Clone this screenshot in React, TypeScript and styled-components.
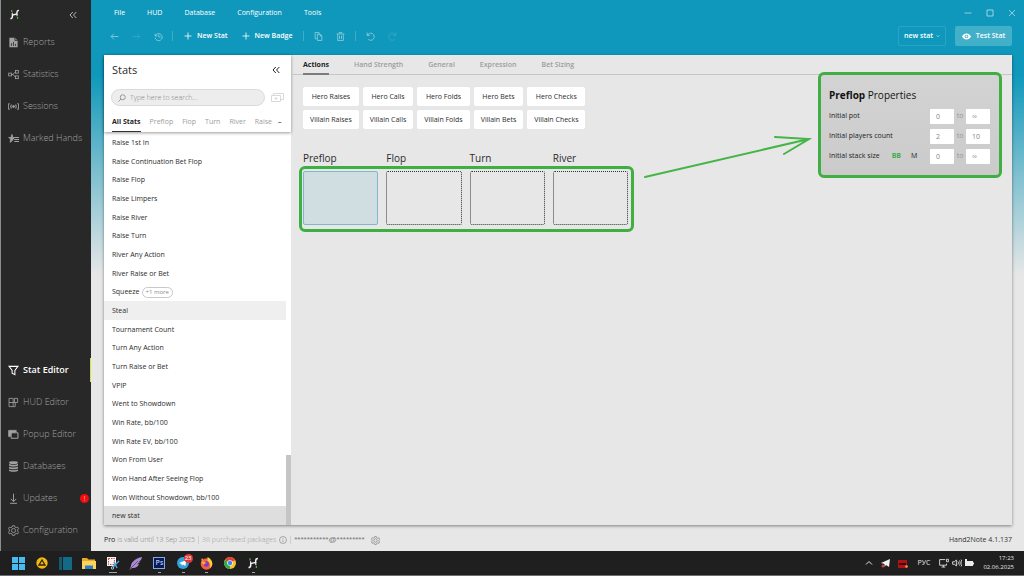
import React from "react";
import styled, { createGlobalStyle, css } from "styled-components";

const GlobalStyle = createGlobalStyle`
  *, *::before, *::after { box-sizing: border-box; }
  html, body { margin: 0; padding: 0; background: #e7e7e7; }
  body, button, input, select {
    font-family: "Open Sans", "Noto Sans", sans-serif;
    font-size: 7px;
    line-height: 10px;
    color: #2b2b2b;
  }
  button, input, select { border: 0; margin: 0; padding: 0; background: none; border-radius: 0; outline: none; }
  button { cursor: pointer; white-space: nowrap; }
  ul { list-style: none; margin: 0; padding: 0; }
  h1, h2, h3 { margin: 0; font-weight: 400; }
  a { color: inherit; text-decoration: none; }
  svg { display: block; flex: none; }
`;

/* ---------- Shell ---------- */

const Desktop = styled.div`
  min-height: 100vh;
  display: flex;
  flex-direction: column;
`;

const AppWindow = styled.div`
  flex: 1;
  display: flex;
  border-left: 1px solid #8d8d8d;
`;

const Sidebar = styled.nav`
  width: 90px;
  flex: none;
  display: flex;
  flex-direction: column;
  justify-content: space-between;
  background: #282828;
  padding-bottom: 5px;
`;

const SidebarHeader = styled.div`
  height: 26px;
  display: flex;
  align-items: center;
  justify-content: space-between;
  padding: 3px 14px 0 8px;
`;

const NavItem = styled.a<{ $active?: boolean }>`
  position: relative;
  height: 32px;
  display: flex;
  align-items: center;
  gap: 4px;
  padding-left: 7px;
  font-size: 9px;
  line-height: 12px;
  white-space: nowrap;
  color: ${(p) => (p.$active ? "#ffffff" : "#a2a2a2")};
  font-weight: ${(p) => (p.$active ? 600 : 300)};
  ${(p) =>
    p.$active &&
    css`
      &::after {
        content: "";
        position: absolute;
        right: 0;
        top: 4px;
        bottom: 4px;
        width: 1px;
        background: #d6e04a;
      }
    `}
`;

const AlertDot = styled.span`
  width: 9px;
  height: 9px;
  margin: 0 2px 0 auto;
  border-radius: 50%;
  background: #f30d0d;
  color: #fff;
  font-size: 7px;
  line-height: 9px;
  text-align: center;
`;

const Main = styled.main`
  flex: 1;
  min-width: 0;
  display: flex;
  flex-direction: column;
  padding: 0 12px 0 13px;
  background: linear-gradient(#0f98bb 0, #0f98bb 75px, #7fc0d0 175px, #e7e7e7 275px);
`;

/* ---------- Title bar and toolbar ---------- */

const TitleBar = styled.header`
  height: 26px;
  display: flex;
  align-items: center;
  justify-content: space-between;
  padding-left: 10px;
`;

const MenuBar = styled.div`
  display: flex;
  gap: 22px;
`;

const MenuButton = styled.button`
  color: #fff;
  font-weight: 500;
`;

const WindowControls = styled.div`
  display: flex;
  gap: 14px;
  margin-right: -4px;
`;

const IconButton = styled.button<{ $faint?: boolean }>`
  min-width: 8px;
  display: flex;
  align-items: center;
  justify-content: center;
  color: #fff;
  opacity: ${(p) => (p.$faint ? 0.2 : 0.65)};
`;

const Toolbar = styled.div`
  height: 20px;
  margin: 0 0 9px -1px;
  display: flex;
  align-items: center;
`;

const ToolButton = styled(IconButton)`
  width: 22px;
  height: 20px;
`;

const ToolDivider = styled.span`
  width: 1px;
  height: 10px;
  margin: 0 4px 0 3px;
  background: #3fadc8;
`;

const AddButton = styled.button`
  display: flex;
  align-items: center;
  gap: 5px;
  padding: 0 7px;
  color: #fff;
  font-weight: 600;
`;

const ToolbarRight = styled.div`
  margin-left: auto;
  display: flex;
  gap: 9px;
`;

const StatPicker = styled.label`
  width: 48px;
  height: 20px;
  display: flex;
  align-items: center;
  padding: 0 5px;
  border: 1px solid #2ba3c2;
  border-radius: 2px;
  color: #fff;
`;

const StatSelect = styled.select`
  appearance: none;
  flex: 1;
  min-width: 0;
  color: #fff;
  font-weight: 600;
`;

const TestButton = styled.button`
  width: 57px;
  height: 20px;
  display: flex;
  align-items: center;
  justify-content: center;
  gap: 5px;
  border-radius: 2px;
  background: #43b0ca;
  color: #fff;
  font-weight: 600;
`;

/* ---------- Workspace ---------- */

const Workspace = styled.div`
  flex: 1;
  display: flex;
  background: #e7e7e7;
  box-shadow: 0 1px 3px rgba(0, 0, 0, 0.45);
`;

const StatsPanel = styled.section`
  width: 187px;
  flex: none;
  display: flex;
  flex-direction: column;
  background: #fff;
`;

const StatsHead = styled.div`
  position: relative;
  height: 77px;
  margin-bottom: 1px;
  display: flex;
  flex-direction: column;
  gap: 10px;
  padding: 6px 7px 0 8px;
  box-shadow: 0 1px 3px rgba(0, 0, 0, 0.4);
`;

const PanelTitleRow = styled.div`
  display: flex;
  justify-content: space-between;
  align-items: center;
  height: 18px;
  padding-right: 4px;
`;

const PanelTitle = styled.h2`
  font-size: 11px;
  line-height: 16px;
`;

const SearchRow = styled.div`
  display: flex;
  align-items: center;
  justify-content: space-between;
`;

const SearchBox = styled.label`
  width: 154px;
  height: 17px;
  margin-left: -1px;
  display: flex;
  align-items: center;
  gap: 4px;
  padding-left: 6px;
  border: 1px solid #dadada;
  border-radius: 9px;
  background: #ededed;
  color: #858585;
`;

const SearchInput = styled.input`
  flex: 1;
  min-width: 0;
  font-weight: 300;
  &::placeholder { color: #858585; opacity: 1; }
`;

const StatTabs = styled.div`
  display: flex;
  gap: 9px;
`;

const Tab = styled.button<{ $active?: boolean }>`
  height: 16px;
  padding-bottom: 3px;
  border-bottom: 1px solid ${(p) => (p.$active ? "#333" : "transparent")};
  color: ${(p) => (p.$active ? "#1f1f1f" : "#9c9c9c")};
  font-weight: ${(p) => (p.$active ? 700 : 400)};
`;

const OverflowTab = styled(Tab)`
  color: #444;
  font-weight: 600;
  margin-left: -3px;
`;

const ListArea = styled.div`
  flex: 1;
  display: flex;
`;

const StatList = styled.ul`
  flex: 1;
  display: flex;
  flex-direction: column;
`;

const StatRow = styled.li<{ $tone?: "hover" | "selected" }>`
  flex: 1;
  min-height: 18px;
  display: flex;
  align-items: center;
  gap: 2px;
  padding: 1px 0 0 8px;
  background: ${(p) =>
    p.$tone === "hover" ? "#efefef" : p.$tone === "selected" ? "#dedede" : "transparent"};
`;

const MoreBadge = styled.span`
  padding: 0 3px;
  border: 1px solid #c8c8c8;
  border-radius: 6px;
  font-size: 6px;
  line-height: 9px;
  color: #8d8d8d;
`;

const ScrollTrack = styled.div`
  width: 5px;
  display: flex;
  align-items: flex-end;
`;

const ScrollThumb = styled.div`
  width: 100%;
  height: 70px;
  background: #c5c5c5;
`;

/* ---------- Editor ---------- */

const Editor = styled.section`
  position: relative;
  flex: 1;
  min-width: 0;
`;

const EditorTabs = styled.div`
  display: flex;
  gap: 25px;
  height: 20px;
  padding: 0 12px;
  border-bottom: 1px solid #c6c6c6;
`;

const EditorTab = styled(Tab)`
  height: 20px;
  padding: 2px 0 0;
  border-bottom: 2px solid ${(p) => (p.$active ? "#7c7c7c" : "transparent")};
  font-weight: ${(p) => (p.$active ? 700 : 600)};
`;

const ActionGrid = styled.div`
  display: grid;
  grid-template-columns: repeat(5, max-content);
  gap: 4px;
  padding: 12px;
`;

const ActionButton = styled.button`
  height: 19px;
  padding: 0 7px;
  border-radius: 2px;
  background: #fff;
`;

const Streets = styled.div`
  width: 335px;
  margin: 9px 0 0 8px;
`;

const StreetRow = styled.div`
  display: grid;
  grid-template-columns: repeat(4, 1fr);
  gap: 8px;
`;

const StreetNames = styled(StreetRow)`
  padding: 0 6px 0 4px;
`;

const StreetName = styled.h3`
  font-size: 10px;
  line-height: 16px;
`;

const SlotFrame = styled(StreetRow)`
  padding: 2px 3px 4px 1px;
  border: 3px solid #3fae43;
  border-radius: 6px;
`;

const Slot = styled.button<{ $active?: boolean }>`
  height: 54px;
  border-radius: 2px;
  border: 1px ${(p) => (p.$active ? "solid #7db9cb" : "dotted #333")};
  background: ${(p) => (p.$active ? "#d0dde1" : "transparent")};
`;

const ArrowLine = styled.svg`
  position: absolute;
  left: 352px;
  top: 78px;
`;

const PropertiesCard = styled.form`
  position: absolute;
  top: 17px;
  right: 10px;
  width: 184px;
  height: 106px;
  padding: 12px 9px 0 8px;
  border: 3px solid #3fae43;
  border-radius: 6px;
  background: linear-gradient(#d3d3d3, #cbcbcb);
`;

const CardTitle = styled.h2`
  margin-bottom: 3px;
  font-size: 10px;
  line-height: 16px;
  color: #111;
`;

const PropRow = styled.div`
  height: 20px;
  display: flex;
  align-items: center;
  color: #222;
`;

const RangeGroup = styled.div`
  margin-left: auto;
  display: grid;
  grid-template-columns: 24px 12px 24px;
  align-items: center;
  text-align: center;
  color: #969696;
`;

const RangeInput = styled.input`
  width: 24px;
  height: 15px;
  padding-left: 6px;
  border-radius: 1px;
  background: #fff;
  color: #858585;
`;

const UnitOption = styled.label<{ $on?: boolean }>`
  margin-left: ${(p) => (p.$on ? "12px" : "10px")};
  color: ${(p) => (p.$on ? "#3cae50" : "#222")};
  font-weight: ${(p) => (p.$on ? 700 : 400)};
`;

const HiddenRadio = styled.input`
  position: absolute;
  opacity: 0;
  width: 1px;
  height: 1px;
`;

/* ---------- Status bar ---------- */

const StatusBar = styled.footer`
  height: 26px;
  display: flex;
  align-items: center;
  padding-top: 4px;
  color: #7c7c7c;
  font-weight: 300;
  white-space: nowrap;
`;

const Strong = styled.strong`
  margin-right: 2px;
  color: #222;
`;

const Pale = styled.span`
  margin-right: 3px;
  color: #9e9e9e;
`;

const StatusDivider = styled.span`
  width: 1px;
  height: 8px;
  margin: 0 3px;
  background: #cecece;
`;

const Account = styled.span`
  margin-right: 6px;
  font-family: "Liberation Sans", sans-serif;
  font-size: 8px;
  color: #777;
`;

const Version = styled.span`
  margin-left: auto;
  color: #333;
  font-weight: 400;
`;

/* ---------- Taskbar ---------- */

const Taskbar = styled.footer`
  height: 25px;
  flex: none;
  display: flex;
  align-items: center;
  justify-content: space-between;
  padding: 0 10px 0 7px;
  background: #1f1f1f;
  border-bottom: 1px solid #6e6e6e;
`;

const TaskIcons = styled.div`
  width: 258px;
  display: grid;
  grid-template-columns: repeat(11, 1fr);
`;

const TaskButton = styled.button<{ $mark?: "dot" | "bar" }>`
  position: relative;
  height: 24px;
  display: flex;
  align-items: center;
  justify-content: center;
  ${(p) =>
    p.$mark &&
    css`
      &::after {
        content: "";
        position: absolute;
        bottom: 2px;
        left: 50%;
        width: ${p.$mark === "bar" ? 8 : 3}px;
        margin-left: ${p.$mark === "bar" ? -4 : -1}px;
        height: 1px;
        background: #a5a5a5;
      }
    `}
`;

const CountBadge = styled.span`
  position: absolute;
  top: 3px;
  right: 2px;
  width: 9px;
  height: 9px;
  border-radius: 50%;
  background: #e2383c;
  color: #fff;
  font-size: 6px;
  line-height: 9px;
  text-align: center;
`;

const PsTile = styled.span`
  width: 12px;
  height: 12px;
  border: 1px solid #86a8e8;
  background: #0a1a52;
  color: #a9c8ff;
  font-weight: 600;
  line-height: 10px;
`;

const Tray = styled.div`
  display: flex;
  align-items: center;
  gap: 9px;
  color: #e6e6e6;
`;

const TrayGroup = styled.div<{ $gap: number }>`
  display: flex;
  align-items: center;
  gap: ${(p) => p.$gap}px;
`;

const Clock = styled.time`
  text-align: right;
  font-size: 6px;
  line-height: 9px;
`;

/* ---------- Icons ---------- */

type IconProps = { size?: number; children: React.ReactNode; w?: number };

const Glyph = ({ size = 10, w = 1.2, children }: IconProps) => (
  <svg
    width={size}
    height={size}
    viewBox="0 0 16 16"
    fill="none"
    stroke="currentColor"
    strokeWidth={w}
    aria-hidden="true"
  >
    {children}
  </svg>
);

const HandLogo = ({ size = 11 }: { size?: number }) => (
  <svg width={size} height={size} viewBox="0 0 16 16" fill="none" aria-hidden="true">
    <path d="M4 1.500v3M12.500 11.500v3" stroke="#4caf3a" strokeWidth="1.800" />
    <path d="M2 14c2.500 0 3-1.500 3-3.500V8.800l6.500-1.600V5.500c0-2 .5-3.500 3-3.500" stroke="#f2f2f2" strokeWidth="2" />
    <path d="M4.800 9V5.500M11.700 7v3.500" stroke="#f2f2f2" strokeWidth="1.500" />
  </svg>
);

const DoubleChevron = ({ color }: { color: string }) => (
  <svg width="8" height="8" viewBox="0 0 8 8" fill="none" stroke={color} aria-hidden="true">
    <path d="M3.800 1 1 4l2.800 3M7.300 1 4.500 4l2.800 3" />
  </svg>
);

const navIcons: Record<string, React.ReactNode> = {
  Reports: (
    <>
      <path d="M2 1h8l4 4v10H2z" fill="currentColor" stroke="none" />
      <path d="M10 1v4h4M5 13V9M8 13V7M11 13v-3" stroke="#282828" />
    </>
  ),
  Statistics: (
    <>
      <rect x="1" y="6" width="4" height="4" />
      <rect x="11" y="2" width="4" height="4" />
      <rect x="11" y="10" width="4" height="4" />
      <path d="M5 8h3M11 4 7 8l4 4" />
    </>
  ),
  Sessions: (
    <>
      <circle cx="8" cy="8" r="1.500" fill="currentColor" />
      <path d="M5 5c-1.200 2-1.200 4 0 6M11 5c1.200 2 1.200 4 0 6M2 3C0 6 0 10 2 13M14 3c2 3 2 7 0 10" strokeWidth="1.500" />
    </>
  ),
  "Marked Hands": (
    <>
      <path d="M10 6.500H7L5.700 2 4.500 6.500H1l3 2.500-1 4.500L6.500 11" fill="currentColor" />
      <path d="M9 6.500h7M9 9.500h7M9 12.500h7" strokeWidth="1.500" />
    </>
  ),
  "Stat Editor": <path d="M1.500 2h13L10 8v6l-4-2V8z" strokeWidth="1.500" />,
  "HUD Editor": <path d="M1.500 2h6v12h-6zM1.500 8h12.500V2H9.500v6M7.500 14h3V8" />,
  "Popup Editor": (
    <>
      <path d="M3 11H1V2h11v2" fill="currentColor" />
      <rect x="4.500" y="5.500" width="10" height="8" rx="1" fill="#282828" strokeWidth="1.600" />
    </>
  ),
  Databases: (
    <g fill="currentColor" stroke="none">
      <ellipse cx="8" cy="2.500" rx="6.500" ry="2" />
      <path d="M1.500 4c2 2 11 2 13 0v2.500c-2 2-11 2-13 0zM1.500 8c2 2 11 2 13 0v2.500c-2 2-11 2-13 0zM1.500 12c2 2 11 2 13 0v2c-2 2-11 2-13 0z" />
    </g>
  ),
  Updates: <path d="M8 1v11M4 8.500 8 12.500l4-4M3 15h10" strokeWidth="1.400" />,
  Configuration: (
    <>
      <path d="M6.500 1h3l.6 2 1.900.8 2-.8 1.300 2.500L14 7v2l1.300 1.500L14 13l-2-.8-1.900.8-.6 2h-3l-.6-2-1.900-.8-2 .8L.7 10.500 2 9V7L.7 5.500 2 3l2 .8L5.900 3z" />
      <circle cx="8" cy="8" r="3" />
    </>
  ),
};

const Gear = () => <Glyph size={9}>{navIcons.Configuration}</Glyph>;

/* ---------- Data ---------- */

const topNav = ["Reports", "Statistics", "Sessions", "Marked Hands"];
const bottomNav = ["Stat Editor", "HUD Editor", "Popup Editor", "Databases", "Updates", "Configuration"];
const menus = ["File", "HUD", "Database", "Configuration", "Tools"];
const statTabs = ["All Stats", "Preflop", "Flop", "Turn", "River", "Raise"];
const editorTabs = ["Actions", "Hand Strength", "General", "Expression", "Bet Sizing"];
const actions = ["Raises", "Calls", "Folds", "Bets", "Checks"];
const streets = ["Preflop", "Flop", "Turn", "River"];
const stats = [
  "Raise 1st In",
  "Raise Continuation Bet Flop",
  "Raise Flop",
  "Raise Limpers",
  "Raise River",
  "Raise Turn",
  "River Any Action",
  "River Raise or Bet",
  "Squeeze",
  "Steal",
  "Tournament Count",
  "Turn Any Action",
  "Turn Raise or Bet",
  "VPIP",
  "Went to Showdown",
  "Win Rate, bb/100",
  "Win Rate EV, bb/100",
  "Won From User",
  "Won Hand After Seeing Flop",
  "Won Without Showdown, bb/100",
  "new stat",
];

/* ---------- Composite parts ---------- */

const NavGroup = ({ items }: { items: string[] }) => (
  <div>
    {items.map((name) => (
      <NavItem key={name} href="#" $active={name === "Stat Editor"}>
        <Glyph size={11}>{navIcons[name]}</Glyph>
        {name}
        {name === "Updates" && <AlertDot>!</AlertDot>}
      </NavItem>
    ))}
  </div>
);

const Plus = () => (
  <Glyph size={8} w={1.6}>
    <path d="M8 1v14M1 8h14" />
  </Glyph>
);

const Range = ({ label, from, to }: { label: string; from: string; to: string }) => (
  <RangeGroup>
    <RangeInput aria-label={`${label} from`} defaultValue={from} />
    <span>to</span>
    <RangeInput aria-label={`${label} to`} defaultValue={to} />
  </RangeGroup>
);

const TaskbarIcons = () => (
  <TaskIcons>
    <TaskButton aria-label="Start">
      <svg width="13" height="13" viewBox="0 0 13 13" fill="#45bdf0">
        <path d="M0 0h6v6H0zM7 0h6v6H7zM0 7h6v6H0zM7 7h6v6H7z" />
      </svg>
    </TaskButton>
    <TaskButton aria-label="Player">
      <svg width="12" height="12" viewBox="0 0 12 12">
        <circle cx="6" cy="6" r="5.700" fill="#f2b619" />
        <path d="M6 3 9 8H3z" fill="#f2b619" stroke="#2a2410" strokeWidth="1.300" />
      </svg>
    </TaskButton>
    <TaskButton aria-label="Library">
      <svg width="13" height="13" viewBox="0 0 13 13">
        <path d="M0 0h3v13H0z" fill="#125a70" />
        <path d="M4 0h9v13H4z" fill="#136a84" />
      </svg>
    </TaskButton>
    <TaskButton aria-label="Files">
      <svg width="14" height="13" viewBox="0 0 14 13">
        <path d="M0 1h5l1.500 1.500H13V12H0z" fill="#e9a92c" />
        <path d="M0 4h14v8H0z" fill="#fbd45c" />
        <path d="M3 12V8.500h8V12z" fill="#2b7fc9" />
      </svg>
    </TaskButton>
    <TaskButton aria-label="Screenshot" $mark="bar">
      <svg width="14" height="14" viewBox="0 0 14 14" fill="none">
        <path d="M1 1h9v9H1z" fill="#f3f3f3" />
        <path d="M2.500 2.500h6v6h-6z" stroke="#d2483c" strokeDasharray="1.500 1" />
        <path d="M13 5 7 11M8 6l3 6" stroke="#4aa3cf" strokeWidth="1.500" />
        <circle cx="6.500" cy="12" r="1.200" stroke="#9ad1ec" />
      </svg>
    </TaskButton>
    <TaskButton aria-label="Notes">
      <svg width="13" height="13" viewBox="0 0 13 13">
        <path d="M13 0C7 1 2 5 2 9l-1.500 4L3 11c5 0 6-2 7-4l-2 .2L11 5l-1-.4C12 3.500 12.500 2 13 0z" fill="#a98bd0" />
        <path d="M1 12 9 4" stroke="#6f4f9d" />
      </svg>
    </TaskButton>
    <TaskButton aria-label="Photoshop" $mark="dot">
      <PsTile>Ps</PsTile>
    </TaskButton>
    <TaskButton aria-label="Telegram" $mark="dot">
      <svg width="12" height="12" viewBox="0 0 12 12">
        <circle cx="6" cy="6" r="6" fill="#34a2da" />
        <path d="M2 6 9.500 3 8.300 9 6 7.500 4.800 8.800 4.500 7z" fill="#fff" />
      </svg>
      <CountBadge>23</CountBadge>
    </TaskButton>
    <TaskButton aria-label="Firefox" $mark="dot">
      <svg width="13" height="13" viewBox="0 0 13 13">
        <circle cx="6.500" cy="7" r="5.800" fill="#f9603a" />
        <path d="M7.500 0c3 1.500 5 4 4.800 7-.2 2-1.300 3.500-2.500 4.200C11 8 9.500 5 7.500 4z" fill="#ffcf3b" />
        <path d="M1 3.500 2 1l2 2.500z" fill="#ff9a2e" />
        <circle cx="6.200" cy="7" r="2.700" fill="#7a3ec8" />
        <path d="M1 5c2-1 4 0 5.500 1-1 .2-2 .8-2.500 2z" fill="#ffab34" />
      </svg>
    </TaskButton>
    <TaskButton aria-label="Chrome">
      <svg width="12" height="12" viewBox="0 0 12 12">
        <circle cx="6" cy="6" r="6" fill="#f4c52c" />
        <path d="M6 6 .8 3A6 6 0 0 1 11.200 3z" fill="#e14436" />
        <path d="M6 6v6A6 6 0 0 1 .8 3z" fill="#35a852" />
        <circle cx="6" cy="6" r="2.800" fill="#fff" />
        <circle cx="6" cy="6" r="2.200" fill="#4285f4" />
      </svg>
    </TaskButton>
    <TaskButton aria-label="Hand2Note" $mark="dot">
      <HandLogo size={12} />
    </TaskButton>
  </TaskIcons>
);

const SystemTray = () => (
  <Tray>
    <TrayGroup $gap={7}>
      <Glyph size={8} w={2}>
        <path d="m2 11 6-6 6 6" />
      </Glyph>
      <svg width="11" height="10" viewBox="0 0 11 10">
        <path d="M1 5 10 1 9 9 6 7 4.500 9V6z" fill="#f1f1f1" />
        <circle cx="3" cy="8" r="1.500" fill="#d9372f" />
      </svg>
      <svg width="10" height="9" viewBox="0 0 10 9">
        <path d="M0 1h9v8H0z" fill="#b01218" />
        <path d="M1 4h7v2H1z" fill="#3a0808" />
        <circle cx="8.500" cy="7.500" r="1.300" fill="#f5a52a" />
      </svg>
    </TrayGroup>
    <span>РУС</span>
    <TrayGroup $gap={3}>
      <Glyph size={10} w={1.4}>
        <path d="M10 2.500H1v9h11V9M4 14.500h6M7 11.500v3M12 2h3v4h-3z" />
      </Glyph>
      <Glyph size={10} w={1.4}>
        <path d="M1 6h3l3-3v10l-3-3H1zM9.500 5.500c1 1.500 1 3.500 0 5M12 4c1.500 2.500 1.500 5.500 0 8M14.500 2.500c2 3 2 8 0 11" />
      </Glyph>
      <svg width="9" height="8" viewBox="0 0 9 8" fill="#ececec">
        <path d="M0 2h8v5H0zM8 3.500h1v2H8zM0 0h2v3H0z" />
      </svg>
    </TrayGroup>
    <Clock>
      17:23
      <br />
      02.06.2025
    </Clock>
  </Tray>
);

/* ---------- Page ---------- */

export default function App() {
  return (
    <Desktop>
      <GlobalStyle />
      <AppWindow>
        <Sidebar>
          <div>
            <SidebarHeader>
              <HandLogo />
              <IconButton aria-label="Collapse menu">
                <DoubleChevron color="#fff" />
              </IconButton>
            </SidebarHeader>
            <NavGroup items={topNav} />
          </div>
          <NavGroup items={bottomNav} />
        </Sidebar>

        <Main>
          <TitleBar>
            <MenuBar>
              {menus.map((m) => (
                <MenuButton key={m}>{m}</MenuButton>
              ))}
            </MenuBar>
            <WindowControls>
              <IconButton aria-label="Minimize">
                <Glyph size={8} w={1.6}><path d="M1 8h14" /></Glyph>
              </IconButton>
              <IconButton aria-label="Maximize">
                <Glyph size={8} w={1.8}><path d="M2 2h12v12H2z" /></Glyph>
              </IconButton>
              <IconButton aria-label="Close">
                <Glyph size={8} w={1.6}><path d="m2 2 12 12M14 2 2 14" /></Glyph>
              </IconButton>
            </WindowControls>
          </TitleBar>

          <Toolbar>
            <ToolButton aria-label="Back">
              <Glyph size={9}><path d="M15 8H2M7 3 2 8l5 5" /></Glyph>
            </ToolButton>
            <ToolButton aria-label="Forward" $faint>
              <Glyph size={9}><path d="M1 8h13M9 3l5 5-5 5" /></Glyph>
            </ToolButton>
            <ToolButton aria-label="History">
              <Glyph size={9}><path d="M2 3v4h4M2.500 6.500A6.300 6.300 0 1 1 2 10M8.500 4.500V9H12" /></Glyph>
            </ToolButton>
            <ToolDivider />
            <AddButton><Plus />New Stat</AddButton>
            <AddButton><Plus />New Badge</AddButton>
            <ToolDivider />
            <ToolButton aria-label="Copy">
              <Glyph size={9}><path d="M5 12H2V1h7v3M6 4h5l3 3v8H6zM11 4v3h3" /></Glyph>
            </ToolButton>
            <ToolButton aria-label="Delete">
              <Glyph size={9}><path d="M1 3.500h14M5.500 3V1h5v2M3 4v11h10V4M6.200 6.500v6M9.800 6.500v6" /></Glyph>
            </ToolButton>
            <ToolDivider />
            <ToolButton aria-label="Undo">
              <Glyph size={9}><path d="M2 1v5h5M2.500 6A6.300 6.300 0 1 1 4 13" /></Glyph>
            </ToolButton>
            <ToolButton aria-label="Redo" $faint>
              <Glyph size={9}><path d="M14 1v5H9M13.500 6A6.300 6.300 0 1 0 12 13" /></Glyph>
            </ToolButton>
            <ToolbarRight>
              <StatPicker>
                <StatSelect aria-label="Stat" defaultValue="new stat">
                  <option>new stat</option>
                </StatSelect>
                <Glyph size={4} w={2}><path d="m2 5 6 6 6-6" /></Glyph>
              </StatPicker>
              <TestButton>
                <svg width="9" height="7" viewBox="0 0 18 14" aria-hidden="true">
                  <path d="M0 7c4-8 14-8 18 0-4 8-14 8-18 0z" fill="#fff" />
                  <circle cx="9" cy="7" r="3.600" fill="#43b0ca" />
                  <circle cx="9" cy="7" r="1.800" fill="#fff" />
                </svg>
                Test Stat
              </TestButton>
            </ToolbarRight>
          </Toolbar>

          <Workspace>
            <StatsPanel>
              <StatsHead>
                <PanelTitleRow>
                  <PanelTitle>Stats</PanelTitle>
                  <button aria-label="Collapse stats">
                    <DoubleChevron color="#222" />
                  </button>
                </PanelTitleRow>
                <SearchRow>
                  <SearchBox>
                    <Glyph size={8} w={1.6}>
                      <circle cx="9.500" cy="6.500" r="5" />
                      <path d="M6 10 1 15" />
                    </Glyph>
                    <SearchInput aria-label="Search stats" placeholder="Type here to search..." />
                  </SearchBox>
                  <button aria-label="Add group">
                    <svg width="13" height="9" viewBox="0 0 13 9" fill="none" stroke="#d9d9d9">
                      <path d="M.5 2.500h9v6h-9zM2.500 2.500v-2h10v6h-3M5 4v3M3.500 5.500h3" />
                    </svg>
                  </button>
                </SearchRow>
                <StatTabs>
                  {statTabs.map((t) => (
                    <Tab key={t} $active={t === "All Stats"}>{t}</Tab>
                  ))}
                  <OverflowTab aria-label="More tabs">–</OverflowTab>
                </StatTabs>
              </StatsHead>
              <ListArea>
                <StatList>
                  {stats.map((s) => (
                    <StatRow
                      key={s}
                      $tone={s === "Steal" ? "hover" : s === "new stat" ? "selected" : undefined}
                    >
                      {s}
                      {s === "Squeeze" && <MoreBadge>+1 more</MoreBadge>}
                    </StatRow>
                  ))}
                </StatList>
                <ScrollTrack>
                  <ScrollThumb />
                </ScrollTrack>
              </ListArea>
            </StatsPanel>

            <Editor>
              <EditorTabs>
                {editorTabs.map((t) => (
                  <EditorTab key={t} $active={t === "Actions"}>{t}</EditorTab>
                ))}
              </EditorTabs>
              <ActionGrid>
                {["Hero", "Villain"].map((who) =>
                  actions.map((a) => (
                    <ActionButton key={who + a}>{`${who} ${a}`}</ActionButton>
                  ))
                )}
              </ActionGrid>
              <Streets>
                <StreetNames>
                  {streets.map((s) => (
                    <StreetName key={s}>{s}</StreetName>
                  ))}
                </StreetNames>
                <SlotFrame>
                  {streets.map((s) => (
                    <Slot key={s} aria-label={s} $active={s === "Preflop"} />
                  ))}
                </SlotFrame>
              </Streets>

              <ArrowLine width="170" height="50" viewBox="0 0 170 50" fill="none" stroke="#46b548" strokeWidth="2" strokeLinecap="round" aria-hidden="true">
                <path d="M2 44 166 6M132 4l34 2-25 15" />
              </ArrowLine>

              <PropertiesCard>
                <CardTitle><b>Preflop</b> Properties</CardTitle>
                <PropRow>
                  Initial pot
                  <Range label="Initial pot" from="0" to="∞" />
                </PropRow>
                <PropRow>
                  Initial players count
                  <Range label="Initial players count" from="2" to="10" />
                </PropRow>
                <PropRow>
                  Initial stack size
                  <UnitOption $on>
                    <HiddenRadio type="radio" name="unit" defaultChecked />
                    BB
                  </UnitOption>
                  <UnitOption>
                    <HiddenRadio type="radio" name="unit" />
                    M
                  </UnitOption>
                  <Range label="Initial stack size" from="0" to="∞" />
                </PropRow>
              </PropertiesCard>
            </Editor>
          </Workspace>

          <StatusBar>
            <Strong>Pro</Strong>
            <span>is valid until 13 Sep 2025</span>
            <StatusDivider />
            <Pale>38 purchased packages</Pale>
            <Glyph size={8}>
              <circle cx="8" cy="8" r="7" />
              <path d="M8 7v5M8 4v1.500" />
            </Glyph>
            <StatusDivider />
            <Account>***********@*********</Account>
            <Gear />
            <Version>Hand2Note 4.1.137</Version>
          </StatusBar>
        </Main>
      </AppWindow>

      <Taskbar>
        <TaskbarIcons />
        <SystemTray />
      </Taskbar>
    </Desktop>
  );
}
